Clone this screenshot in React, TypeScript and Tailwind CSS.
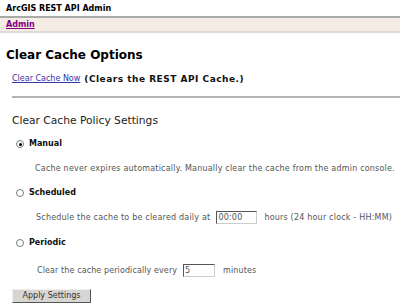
import { useState } from 'react';

const font = { fontFamily: '"DejaVu Sans", Verdana, sans-serif' };

type Mode = 'manual' | 'scheduled' | 'periodic';

function Radio({ checked, onChange }: { checked: boolean; onChange: () => void }) {
  return (
    <span
      onClick={onChange}
      className="flex h-[8px] w-[8px] items-center justify-center rounded-full border border-[#7a7a7a] bg-white"
    >
      {checked && <span className="h-[3px] w-[3px] rounded-full bg-black" />}
    </span>
  );
}

export default function App() {
  const [mode, setMode] = useState<Mode>('manual');
  const [time, setTime] = useState('00:00');
  const [every, setEvery] = useState('5');

  return (
    <div className="h-[306px] w-[400px] overflow-hidden bg-white text-black" style={font}>
      {/* banner */}
      <div className="flex h-[18px] items-center border-b-2 border-[#a9aba7] px-[6px] pt-[1px] text-[8px] font-bold">
        ArcGIS REST API Admin
      </div>
      <div className="flex h-[15px] items-center border-b-2 border-[#dcdad6] bg-[#f5ece6] px-[6px] pt-[1px] text-[8px] font-bold">
        <a href="#" className="text-[#800080] underline">Admin</a>
      </div>

      <h1 className="mt-[14px] px-[6px] text-[12px] font-bold leading-[16px]">Clear Cache Options</h1>

      <p className="mt-[10px] flex h-[12px] items-center pl-[12px] text-[8px] leading-[12px]">
        <a href="#" className="text-[#3333aa] underline">Clear Cache Now</a>
        <span className="ml-[4px] text-[9px] font-bold tracking-[0.5px] text-[#111]">(Clears the REST API Cache.)</span>
      </p>

      <div className="ml-[12px] mt-[11px] h-[2px] bg-[#b4b4b4]" />

      <h2 className="mt-[16px] pl-[12px] text-[10.7px] leading-[14px] text-[#222]">Clear Cache Policy Settings</h2>

      <div className="mt-[10px] pl-[16px] text-[8px] leading-[12px]">
        <label className="flex h-[12px] items-center gap-[5px] font-bold text-[#111]">
          <Radio checked={mode === 'manual'} onChange={() => setMode('manual')} />
          Manual
        </label>
        <p className="mt-[13px] h-[12px] pl-[19px] tracking-[0.2px] text-[#555]">
          Cache never expires automatically. Manually clear the cache from the admin console.
        </p>

        <label className="mt-[12px] flex h-[12px] items-center gap-[5px] font-bold text-[#111]">
          <Radio checked={mode === 'scheduled'} onChange={() => setMode('scheduled')} />
          Scheduled
        </label>
        <div className="mt-[12px] flex h-[13px] items-center pl-[20px] tracking-[0.2px] text-[#555]">
          <span>Schedule the cache to be cleared daily at</span>
          <input
            value={time}
            onChange={(e) => setTime(e.target.value)}
            className="ml-[6px] h-[13px] w-[41px] border border-t-[#555] border-l-[#555] border-r-[#ccc] border-b-[#ccc] px-[1px] text-[8px] text-[#555] outline-none"
          />
          <span className="ml-[7px]">hours (24 hour clock - HH:MM)</span>
        </div>

        <label className="mt-[13px] flex h-[12px] items-center gap-[5px] font-bold text-[#111]">
          <Radio checked={mode === 'periodic'} onChange={() => setMode('periodic')} />
          Periodic
        </label>
        <div className="mt-[15px] flex h-[13px] items-center pl-[21px] tracking-[0.1px] text-[#555]">
          <span>Clear the cache periodically every</span>
          <input
            value={every}
            onChange={(e) => setEvery(e.target.value)}
            className="ml-[6px] h-[13px] w-[32px] border border-t-[#555] border-l-[#555] border-r-[#ccc] border-b-[#ccc] px-[1px] text-[8px] text-[#555] outline-none"
          />
          <span className="ml-[8px]">minutes</span>
        </div>
      </div>

      <button
        type="button"
        className="ml-[12px] mt-[12px] h-[14px] w-[79px] border border-t-[#eee] border-l-[#eee] border-r-[#555] border-b-[#555] bg-[#d8d6d2] text-[8px] leading-[12px] text-[#333]"
      >
        Apply Settings
      </button>
    </div>
  );
}
